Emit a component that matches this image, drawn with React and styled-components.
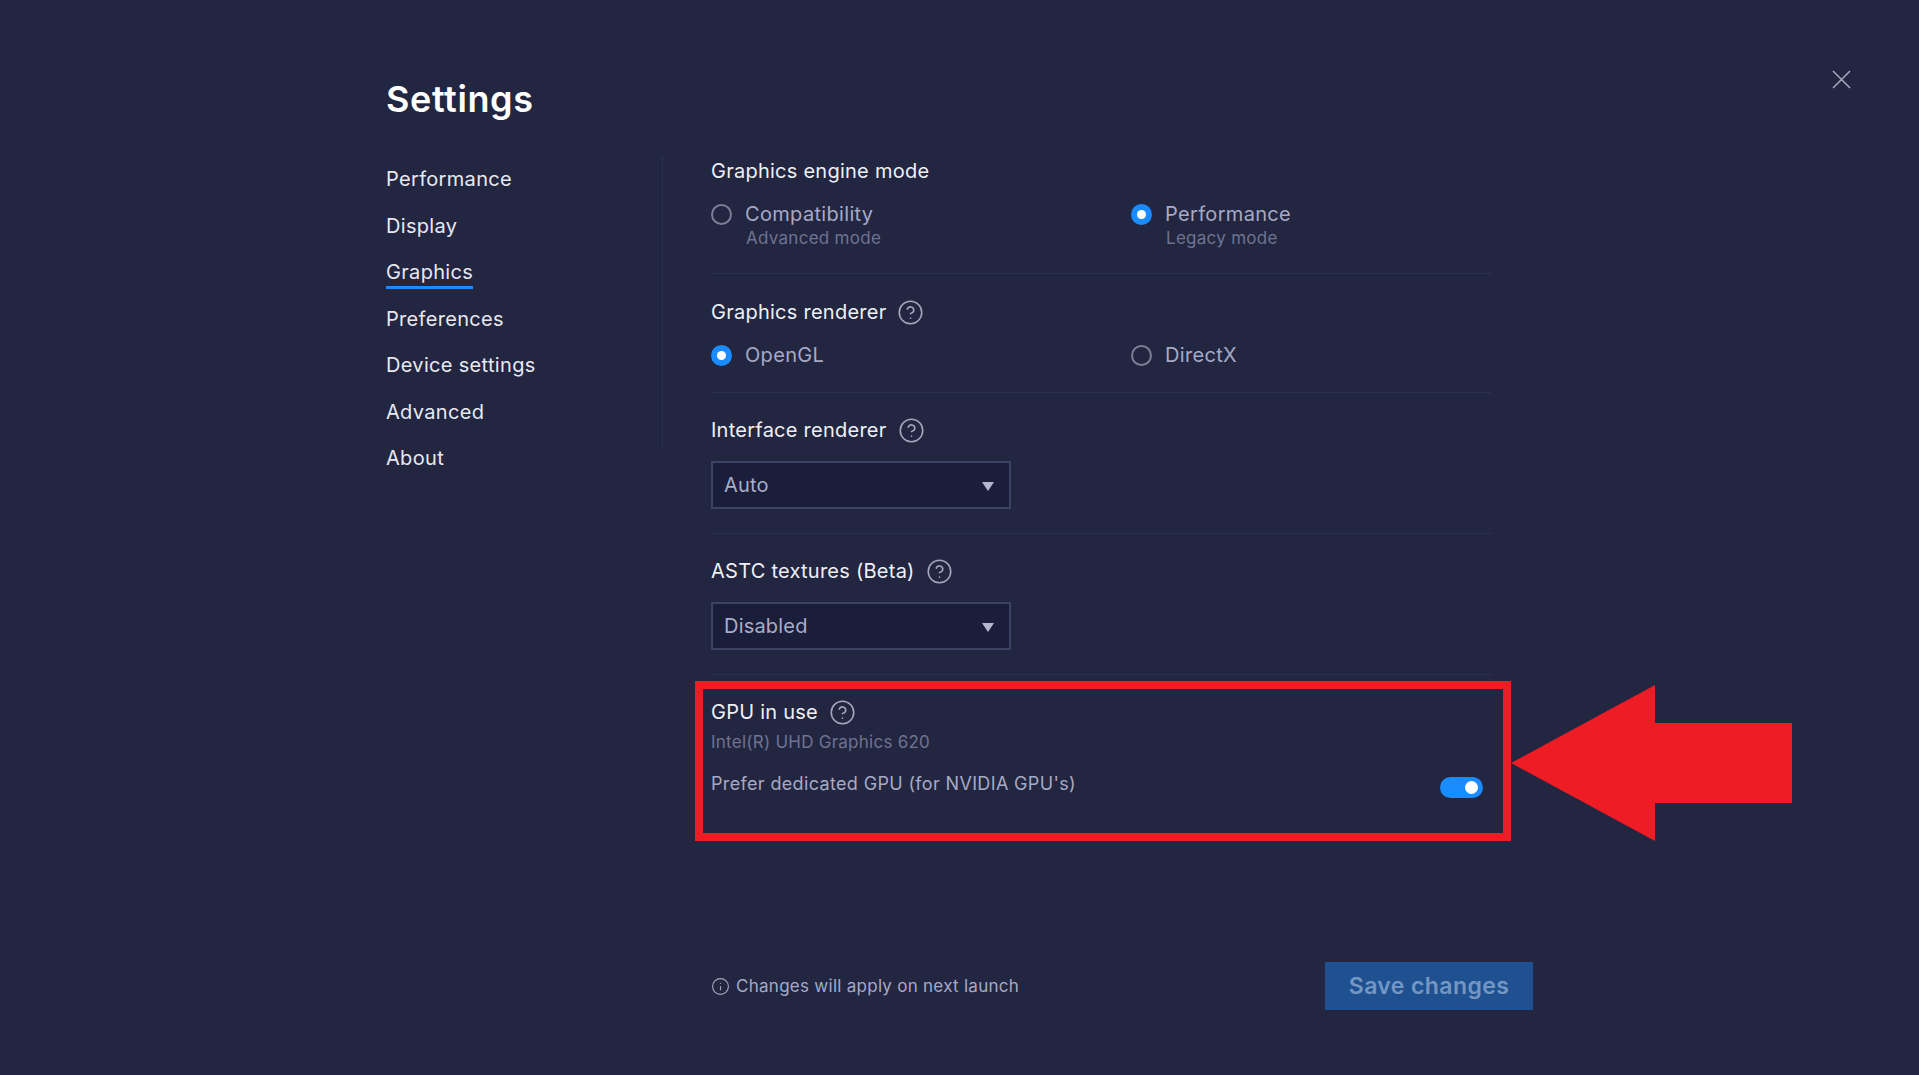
import React from "react";
import styled, { createGlobalStyle } from "styled-components";
import { CircleHelp, Info } from "lucide-react";

const GlobalStyle = createGlobalStyle`
  html, body {
    margin: 0;
    padding: 0;
    background: #222640;
  }
  * {
    box-sizing: border-box;
  }
`;

const Page = styled.div`
  position: relative;
  width: 1919px;
  height: 1075px;
  overflow: hidden;
  padding-left: 386px;
  background: #222640;
  font-family: Inter, "Liberation Sans", sans-serif;
`;

const Title = styled.h1`
  height: 156px;
  margin: 0;
  padding-top: 75px;
  font-size: 36px;
  line-height: 48px;
  font-weight: 600;
  letter-spacing: 0.6px;
  color: #fff;
`;

const Body = styled.div`
  display: flex;
  align-items: flex-start;
`;

const Nav = styled.nav`
  display: flex;
  flex-direction: column;
  align-items: flex-start;
  width: 277px;
  height: 291px;
  margin-right: 48px;
  border-right: 1px solid #2d3150;
`;

const NavItem = styled.a`
  position: relative;
  flex: none;
  height: 46.5px;
  font-size: 20px;
  line-height: 46.5px;
  letter-spacing: 0.32px;
  color: #e8e9f0;
  ${(p) =>
    p.$active &&
    `
    &::after {
      content: "";
      position: absolute;
      left: 0;
      right: 0;
      bottom: 7px;
      height: 3px;
      background: #1a8cff;
    }
  `}
`;

const Content = styled.div`
  display: flex;
  flex-direction: column;
  width: 780px;
`;

const Section = styled.section`
  display: flex;
  flex-direction: column;
  align-items: flex-start;
  padding-top: ${(p) => p.$top ?? 23}px;
  padding-bottom: ${(p) => p.$bottom ?? 24}px;
  border-bottom: 1px solid #2d3150;
`;

const GpuSection = styled.section`
  display: flex;
  flex-direction: column;
  height: 157px;
  padding-top: 23px;
`;

const Label = styled.div`
  display: flex;
  align-items: center;
  gap: 11px;
  height: 28px;
  font-size: 20px;
  letter-spacing: 0.25px;
  color: #eff0f6;
`;

const HelpIcon = styled(CircleHelp)`
  width: 27px;
  height: 27px;
  color: #a3a6bd;
`;

const RadioRow = styled.div`
  display: grid;
  grid-template-columns: 420px 360px;
  margin-top: ${(p) => p.$gap}px;
`;

const RadioOption = styled.div`
  display: flex;
  flex-direction: column;
`;

const RadioLine = styled.div`
  display: flex;
  align-items: center;
  gap: 13px;
  height: 28px;
  font-size: 20px;
  letter-spacing: 0.33px;
  color: #a7aac6;
`;

const Radio = styled.span`
  display: flex;
  align-items: center;
  justify-content: center;
  width: 21px;
  height: 21px;
  border-radius: 50%;
  border: ${(p) => (p.$on ? "none" : "2px solid #7b7e97")};
  background: ${(p) => (p.$on ? "#1a8cff" : "transparent")};
  &::after {
    content: "";
    display: ${(p) => (p.$on ? "block" : "none")};
    width: 9px;
    height: 9px;
    border-radius: 50%;
    background: #fff;
  }
`;

const RadioSub = styled.div`
  height: 20px;
  padding-left: 35px;
  font-size: 17px;
  line-height: 20px;
  letter-spacing: 0.28px;
  color: #6f7391;
`;

const Select = styled.div`
  display: flex;
  align-items: center;
  justify-content: space-between;
  width: 300px;
  height: 48px;
  margin-top: 17px;
  padding: 0 15px 0 11px;
  background: #1a1e3a;
  border: 2px solid #3d4263;
  font-size: 20px;
  letter-spacing: 0.2px;
  color: #a9adc8;
  &::after {
    content: "";
    width: 0;
    height: 0;
    margin-top: 3px;
    border-left: 6.5px solid transparent;
    border-right: 6.5px solid transparent;
    border-top: 9px solid #b5b7cf;
  }
`;

const GpuName = styled.div`
  height: 20px;
  margin-top: 6px;
  font-size: 17px;
  line-height: 20px;
  letter-spacing: 0.25px;
  color: #6f7391;
`;

const PreferRow = styled.div`
  display: flex;
  align-items: flex-start;
  justify-content: space-between;
  margin-top: 18px;
  padding-right: 8px;
  font-size: 18px;
  line-height: 28px;
  letter-spacing: 0.35px;
  color: #a7aac6;
`;

const Toggle = styled.span`
  display: flex;
  align-items: center;
  justify-content: flex-end;
  width: 43px;
  height: 21px;
  margin-top: 7px;
  padding-right: 5px;
  border-radius: 11px;
  background: #1a8cff;
  &::after {
    content: "";
    width: 13px;
    height: 13px;
    border-radius: 50%;
    background: #fff;
  }
`;

const Footer = styled.div`
  display: flex;
  align-items: center;
  justify-content: space-between;
  width: 822px;
  margin-top: 130px;
`;

const Notice = styled.div`
  display: flex;
  align-items: center;
  gap: 6px;
  font-size: 17px;
  letter-spacing: 0.27px;
  color: #a7aac6;
`;

const NoticeIcon = styled(Info)`
  width: 19px;
  height: 19px;
  color: #a3a6bd;
`;

const SaveButton = styled.button`
  width: 208px;
  height: 48px;
  padding: 0;
  border: none;
  background: #1f5190;
  font-family: inherit;
  font-size: 23px;
  font-weight: 600;
  letter-spacing: 0.4px;
  color: #7496c4;
`;

const CloseButton = styled.svg`
  position: absolute;
  top: 70px;
  left: 1832px;
  width: 19px;
  height: 19px;
  stroke: #a7aac0;
  stroke-width: 1.5;
`;

// red annotation drawn over the screenshot
const Highlight = styled.div`
  position: absolute;
  top: 681px;
  left: 695px;
  width: 816px;
  height: 160px;
  border: 8px solid #ee1c25;
`;

const Arrow = styled.svg`
  position: absolute;
  top: 685px;
  left: 1511px;
  width: 281px;
  height: 156px;
  fill: #ee1c25;
`;

const navItems = ["Performance", "Display", "Graphics", "Preferences", "Device settings", "Advanced", "About"];

const App = () => {
  return (
    <Page>
      <GlobalStyle />
      <Title>Settings</Title>
      <Body>
        <Nav>
          {navItems.map((item) => (
            <NavItem key={item} $active={item === "Graphics"}>
              {item}
            </NavItem>
          ))}
        </Nav>
        <Content>
          <Section $top={1} $bottom={25}>
            <Label>Graphics engine mode</Label>
            <RadioRow $gap={15}>
              <RadioOption>
                <RadioLine>
                  <Radio />
                  Compatibility
                </RadioLine>
                <RadioSub>Advanced mode</RadioSub>
              </RadioOption>
              <RadioOption>
                <RadioLine>
                  <Radio $on />
                  Performance
                </RadioLine>
                <RadioSub>Legacy mode</RadioSub>
              </RadioOption>
            </RadioRow>
          </Section>
          <Section $top={24} $bottom={23}>
            <Label>
              Graphics renderer
              <HelpIcon strokeWidth={1.4} />
            </Label>
            <RadioRow $gap={15}>
              <RadioLine>
                <Radio $on />
                OpenGL
              </RadioLine>
              <RadioLine>
                <Radio />
                DirectX
              </RadioLine>
            </RadioRow>
          </Section>
          <Section>
            <Label>
              Interface renderer
              <HelpIcon strokeWidth={1.4} />
            </Label>
            <Select>Auto</Select>
          </Section>
          <Section>
            <Label>
              ASTC textures (Beta)
              <HelpIcon strokeWidth={1.4} />
            </Label>
            <Select>Disabled</Select>
          </Section>
          <GpuSection>
            <Label>
              GPU in use
              <HelpIcon strokeWidth={1.4} />
            </Label>
            <GpuName>Intel(R) UHD Graphics 620</GpuName>
            <PreferRow>
              Prefer dedicated GPU (for NVIDIA GPU's)
              <Toggle />
            </PreferRow>
          </GpuSection>
          <Footer>
            <Notice>
              <NoticeIcon strokeWidth={1.4} />
              Changes will apply on next launch
            </Notice>
            <SaveButton>Save changes</SaveButton>
          </Footer>
        </Content>
      </Body>
      <CloseButton viewBox="0 0 19 19">
        <path d="M1 1L18 18M18 1L1 18" />
      </CloseButton>
      <Highlight />
      <Arrow viewBox="0 0 281 156">
        <path d="M0 78L144 0V38H281V118H144V156Z" />
      </Arrow>
    </Page>
  );
};

export default App;
